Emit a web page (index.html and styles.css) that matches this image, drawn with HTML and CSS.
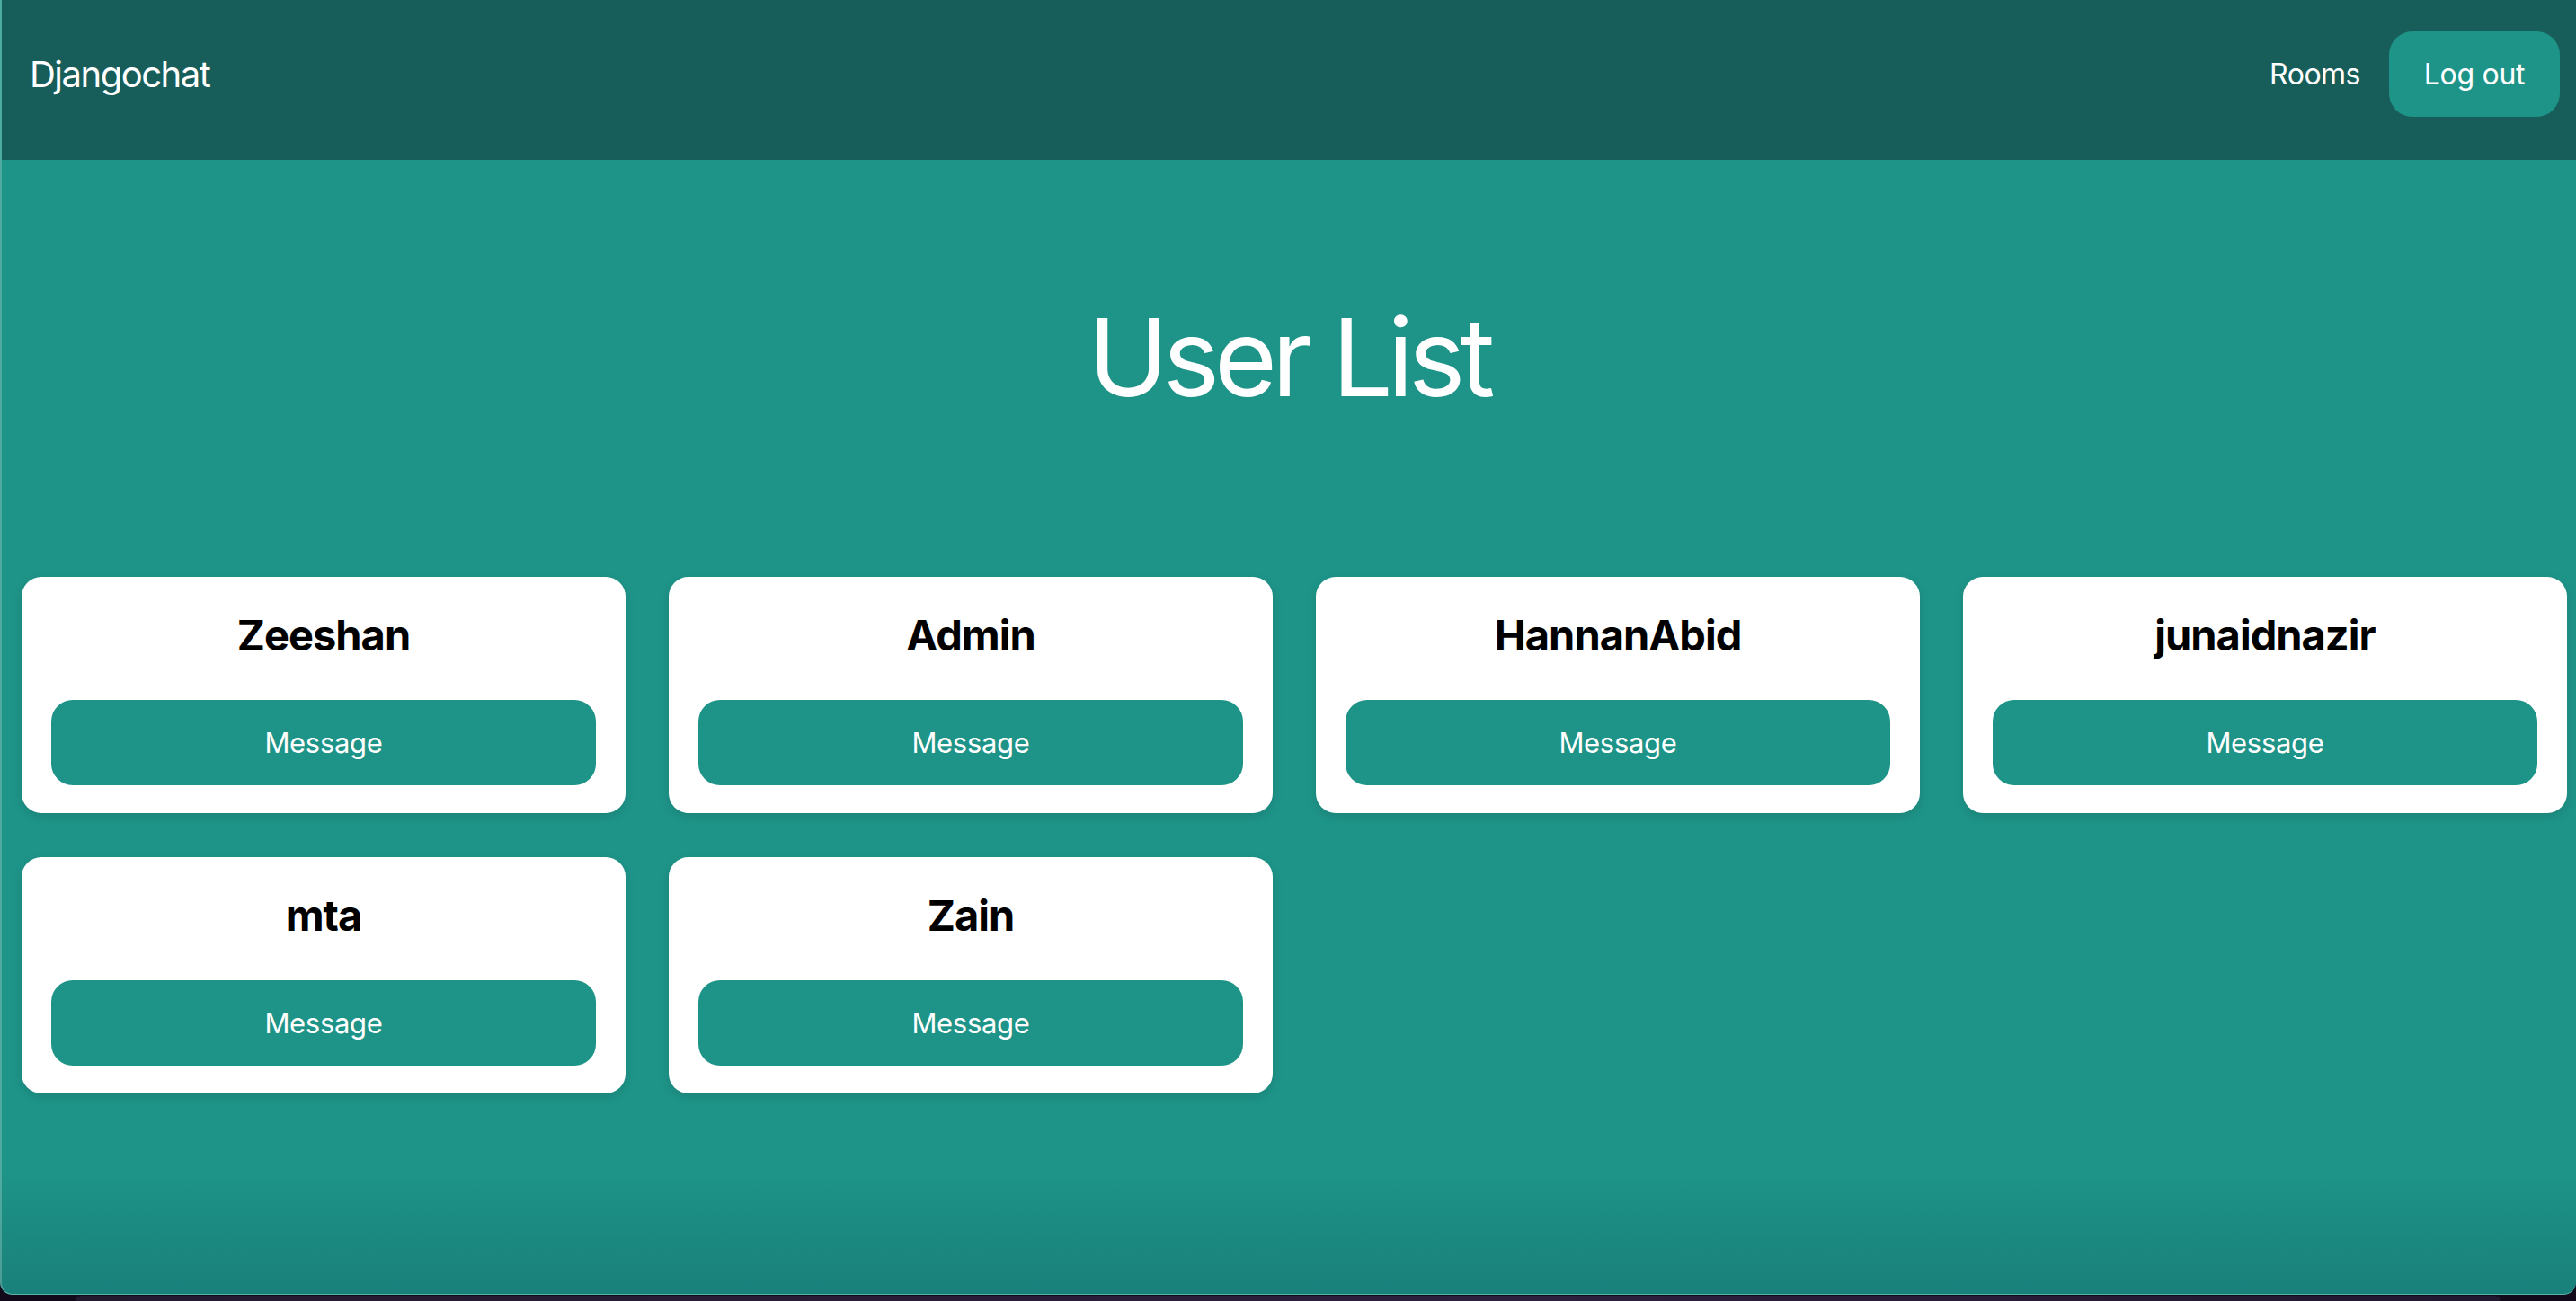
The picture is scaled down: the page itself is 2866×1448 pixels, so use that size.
FILE: index.html
```html
<!DOCTYPE html>
<html lang="en">
<head>
<meta charset="utf-8">
<title>Djangochat</title>
<link rel="stylesheet" href="styles.css">
</head>
<body>
<div class="window">
  <nav class="nav">
    <a class="brand" href="#">Djangochat</a>
    <div class="nav-right">
      <a class="nav-link" href="#">Rooms</a>
      <a class="logout" href="#">Log out</a>
    </div>
  </nav>
  <main class="main">
    <h1 class="title">User List</h1>
    <div class="grid">
      <div class="card"><h2 class="name">Zeeshan</h2><a class="msg" href="#">Message</a></div>
      <div class="card"><h2 class="name">Admin</h2><a class="msg" href="#">Message</a></div>
      <div class="card"><h2 class="name">HannanAbid</h2><a class="msg" href="#">Message</a></div>
      <div class="card"><h2 class="name">junaidnazir</h2><a class="msg" href="#">Message</a></div>
      <div class="card"><h2 class="name">mta</h2><a class="msg" href="#">Message</a></div>
      <div class="card"><h2 class="name">Zain</h2><a class="msg" href="#">Message</a></div>
    </div>
  </main>
</div>
<div class="dock"><div class="dock-bar"></div></div>
</body>
</html>
```
FILE: styles.css
```css
html, body {
  margin: 0;
  padding: 0;
}
body {
  background: #120a1a;
  font-family: Inter, "Noto Sans", sans-serif;
  width: 2866px;
  height: 1448px;
  overflow: hidden;
}
a { text-decoration: none; }
.window {
  box-sizing: border-box;
  height: 1441px;
  border-left: 2px solid rgba(255, 255, 255, 0.22);
  border-bottom: 1px solid #58b3a8;
  border-bottom-left-radius: 14px;
  border-bottom-right-radius: 14px;
  overflow: hidden;
  background: linear-gradient(to bottom, #1e9488 0, #1e9488 1300px, #19807a 1440px);
}
.nav {
  box-sizing: border-box;
  height: 178px;
  background: #175e5a;
  display: flex;
  align-items: center;
  justify-content: space-between;
  padding: 35px 18px 48px 31px;
}
.brand {
  color: #fff;
  font-size: 40px;
  letter-spacing: -1.5px;
}
.nav-right {
  display: flex;
  align-items: center;
  gap: 32px;
}
.nav-link {
  color: #fff;
  font-size: 32px;
  letter-spacing: -0.5px;
}
.logout {
  box-sizing: border-box;
  height: 95px;
  width: 190px;
  display: flex;
  align-items: center;
  justify-content: center;
  background: #1e9488;
  color: #fff;
  font-size: 32px;
  letter-spacing: -0.3px;
  border-radius: 26px;
}
.main {
  display: flex;
  flex-direction: column;
}
.title {
  margin: 160px 0 0;
  text-align: center;
  color: #fff;
  font-size: 120px;
  font-weight: 400;
  line-height: 120px;
  letter-spacing: -6px;
}
.grid {
  margin-top: 184px;
  padding: 0 10px 0 22px;
  display: grid;
  grid-template-columns: repeat(4, 1fr);
  column-gap: 48px;
  row-gap: 49px;
}
.card {
  background: #fff;
  border-radius: 22px;
  padding: 33px 33px 31px;
  box-shadow: 0 4px 12px rgba(0, 0, 0, 0.12);
  display: flex;
  flex-direction: column;
}
.name {
  margin: 0 0 40px;
  text-align: center;
  font-size: 47px;
  line-height: 64px;
  font-weight: 700;
  color: #000;
  letter-spacing: -1px;
}
.msg {
  height: 95px;
  display: flex;
  align-items: center;
  justify-content: center;
  background: #1e9488;
  color: #fff;
  font-size: 31px;
  border-radius: 24px;
  letter-spacing: -0.3px;
}
.dock {
  height: 7px;
  display: flex;
  justify-content: center;
  padding-top: 1px;
}
.dock-bar {
  width: 2700px;
  height: 8px;
  border-radius: 8px 8px 0 0;
  background: linear-gradient(to right, #241a30, #2d1f3e 60%, #221830);
}
```
